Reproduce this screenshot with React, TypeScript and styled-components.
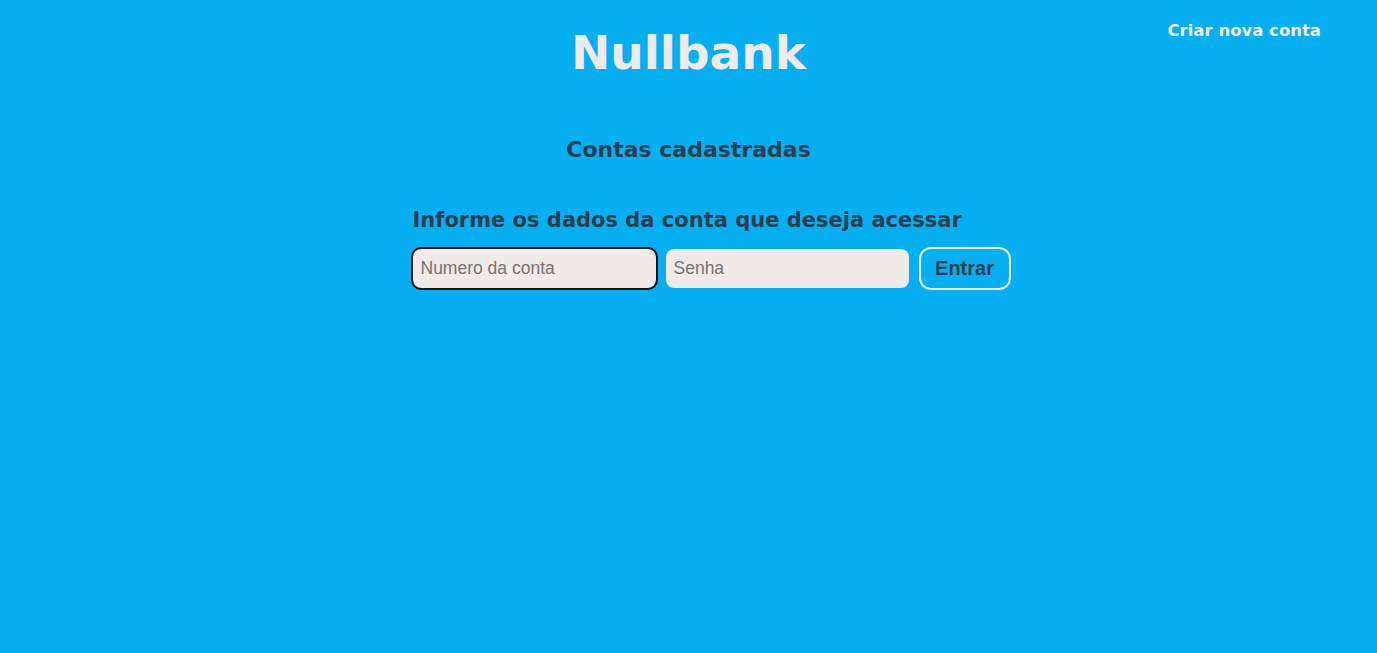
import React from "react";
import styled, { createGlobalStyle } from "styled-components";

const GlobalStyle = createGlobalStyle`
  html, body {
    margin: 0;
    padding: 0;
    background: #06aff2;
  }
  body {
    min-height: 100vh;
    font-family: "DejaVu Sans", "Liberation Sans", sans-serif;
  }
  * { box-sizing: border-box; }
`;

const Page = styled.div`
  min-height: 100vh;
  background: #06aff2;
`;

const Header = styled.header`
  display: grid;
  grid-template-columns: 1fr auto 1fr;
  align-items: start;
`;

const Logo = styled.h1`
  grid-column: 2;
  margin: 25px 0 0;
  font-family: "DejaVu Sans", sans-serif;
  font-weight: 700;
  font-size: 47px;
  line-height: 1.2;
  color: #f0ebe8;
`;

const NavLink = styled.a`
  grid-column: 3;
  justify-self: end;
  margin: 21px 56px 0 0;
  font-family: "DejaVu Sans", sans-serif;
  font-weight: 700;
  font-size: 16.5px;
  line-height: 1.2;
  color: #f0ebe8;
  text-decoration: none;
  cursor: pointer;
`;

const SectionTitle = styled.h2`
  margin: 55.6px 0 0;
  text-align: center;
  font-family: "DejaVu Sans", sans-serif;
  font-weight: 700;
  font-size: 22px;
  line-height: 1.2;
  color: #2c3e50;
`;

const LoginForm = styled.form`
  width: 552px;
  margin: 45px auto 0;
`;

const FormTitle = styled.h3`
  margin: 0;
  font-family: "DejaVu Sans", sans-serif;
  font-weight: 700;
  font-size: 21px;
  line-height: 1.2;
  color: #2c3e50;
  white-space: nowrap;
`;

const FieldRow = styled.div`
  display: flex;
  align-items: center;
  gap: 10px;
  margin-top: 13px;
  width: max-content;
`;

const TextInput = styled.input`
  width: 243px;
  height: 39px;
  padding: 0 8px;
  border: none;
  border-radius: 8px;
  background: #f0ebe8;
  font-family: "Liberation Sans", Arial, sans-serif;
  font-size: 17.5px;
  color: #2c3e50;
  &::placeholder {
    color: #767373;
  }
  &:focus {
    outline: 2px solid #111;
    outline-offset: 0;
  }
`;

const SubmitButton = styled.button`
  height: 43px;
  width: 92px;
  padding: 0;
  border: 2px solid #eaf2f6;
  border-radius: 12px;
  background: transparent;
  font-family: "Liberation Sans", Arial, sans-serif;
  font-weight: 700;
  font-size: 20px;
  color: #2c3e50;
  cursor: pointer;
`;

export default function App() {
  return (
    <Page>
      <GlobalStyle />
      <Header>
        <Logo>Nullbank</Logo>
        <NavLink>Criar nova conta</NavLink>
      </Header>
      <SectionTitle>Contas cadastradas</SectionTitle>
      <LoginForm onSubmit={(e) => e.preventDefault()}>
        <FormTitle>Informe os dados da conta que deseja acessar</FormTitle>
        <FieldRow>
          <TextInput type="text" placeholder="Numero da conta" autoFocus />
          <TextInput type="password" placeholder="Senha" />
          <SubmitButton type="submit">Entrar</SubmitButton>
        </FieldRow>
      </LoginForm>
    </Page>
  );
}
